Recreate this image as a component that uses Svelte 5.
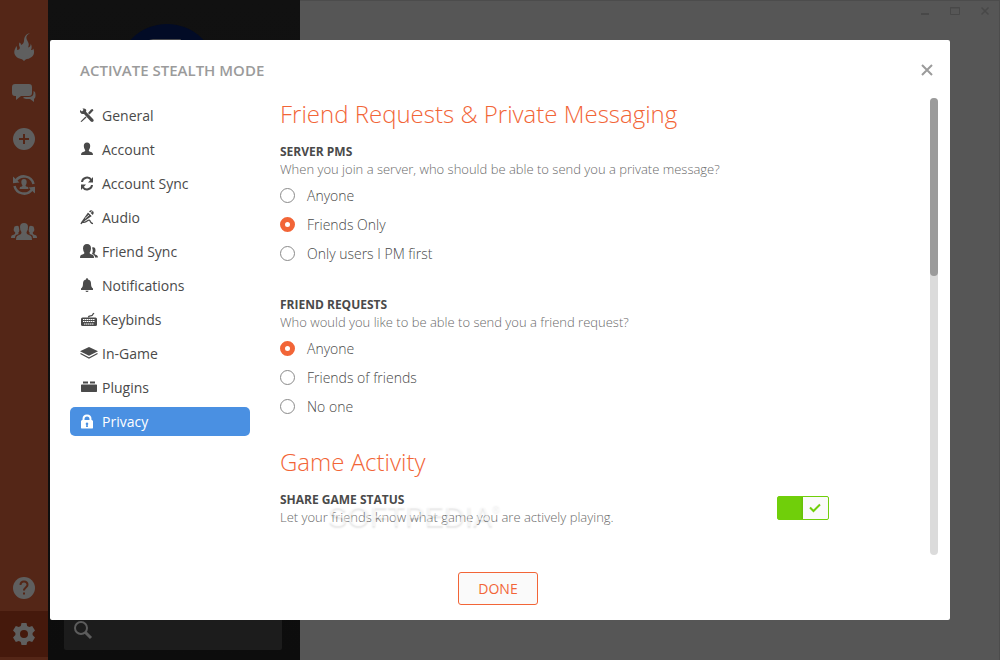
<script lang="ts">
  interface NavItem {
    label: string;
    icon: string;
  }

  interface RadioGroup {
    name: string;
    title: string;
    hint: string;
    options: string[];
  }

  const navItems: NavItem[] = [
    { label: 'General', icon: 'tools' },
    { label: 'Account', icon: 'user' },
    { label: 'Account Sync', icon: 'refresh' },
    { label: 'Audio', icon: 'mic' },
    { label: 'Friend Sync', icon: 'users' },
    { label: 'Notifications', icon: 'bell' },
    { label: 'Keybinds', icon: 'keyboard' },
    { label: 'In-Game', icon: 'layers' },
    { label: 'Plugins', icon: 'brick' },
    { label: 'Privacy', icon: 'lock' }
  ];

  const groups: RadioGroup[] = [
    {
      name: 'pms',
      title: 'SERVER PMS',
      hint: 'When you join a server, who should be able to send you a private message?',
      options: ['Anyone', 'Friends Only', 'Only users I PM first']
    },
    {
      name: 'requests',
      title: 'FRIEND REQUESTS',
      hint: 'Who would you like to be able to send you a friend request?',
      options: ['Anyone', 'Friends of friends', 'No one']
    }
  ];

  let active = $state('Privacy');
  let shareStatus = $state(true);
  let choices = $state<Record<string, string>>({
    pms: 'Friends Only',
    requests: 'Anyone'
  });
</script>

<div class="app">
  <nav class="rail" aria-label="Main">
    <button class="rail-btn" aria-label="Home">
      <svg width="22" height="28" viewBox="0 0 22 28">
        <path d="M17 0c-4 2.500-4.500 5-2.500 8 1.500 2.500 1.700 4 .5 6.500 2-.5 3-2 2.500-4 1.500 2 1.500 4.500.5 6.500 1.300 0 2-.5 2.300-1.500C22.500 20.500 20 25 14 26l-1 .3-2 1.700-2-1.700-1-.3C2 25 0 20 2 16c.5-1 1-1.700 1-3 1.200 1 1.300 2.500 1 4 2 0 3.500-1.500 2.500-3.500-.7-1.500-.7-2.500 0-4 1 .5 1.500 1.500 1.500 2.500 2-1 3-2.500 3-4C11 3.500 13 1 17 0z" />
      </svg>
    </button>
    <button class="rail-btn" aria-label="Messages">
      <svg width="24" height="18" viewBox="0 0 24 18">
        <path d="M3 0h14q3 0 3 3v6q0 3-3 3H9l-5 4v-4H3q-3 0-3-3V3q0-3 3-3z" />
        <path d="M21.500 7q2 .5 2 3v2q0 2-1.500 3v3l-4-3h-4l-3-1 1-1h4.500q5 0 5-4z" />
      </svg>
    </button>
    <button class="rail-btn" aria-label="Add server">
      <svg width="22" height="22" viewBox="0 0 22 22">
        <circle cx="11" cy="11" r="11" />
        <path class="cut" d="M11 6v10M6 11h10" />
      </svg>
    </button>
    <button class="rail-btn" aria-label="Sync friends">
      <svg width="24" height="24" viewBox="0 0 24 24">
        <path class="ring" d="M4 7.500A9.800 9.800 0 0 1 21.500 11M20 16.500A9.800 9.800 0 0 1 2.500 13" />
        <path d="M1 3.500v6.800l6.500-.8zM23 20.500v-6.800l-6.500.8z" />
        <path d="M12 6q2.700 0 2.700 3 0 2-1.200 3.500 0 1 2.500 1.500l.5 2h-9l.5-2q2.500-.5 2.500-1.500Q9.300 11 9.300 9q0-3 2.700-3z" />
      </svg>
    </button>
    <button class="rail-btn" aria-label="Friends">
      <svg width="26" height="17" viewBox="0 0 26 17">
        <path d="M13 0q4 0 4 4 0 3-1 4-1 2 0 3l4 2q1 1 1 4H5q0-3 1-4l4-2q1-1 0-3-1-1-1-4 0-4 4-4z" />
        <path d="M5 3q3-1 3 2 1 4-1 5l1 1-3 1q-1 1-1 3H0q0-3 2-3 3-1 2-3-2-1-1-4 0-2 2-2zM21 3q-3-1-3 2-1 4 1 5l-1 1 3 1q1 1 1 3h4q0-3-2-3-3-1-2-3 2-1 1-4 0-2-2-2z" />
      </svg>
    </button>
    <span class="spacer"></span>
    <button class="rail-btn" aria-label="Help">
      <svg width="22" height="22" viewBox="0 0 22 22">
        <circle cx="11" cy="11" r="11" />
        <path class="cut" d="M7.500 8q0-3.500 3.500-3.500T14.500 8c0 2-3.500 2.500-3.500 5.500M11 15.500v2" />
      </svg>
    </button>
    <button class="rail-btn selected" aria-label="Settings">
      <svg width="22" height="22" viewBox="0 0 22 22">
        <path
          fill-rule="evenodd"
          d="M8.500 0h5l.7 3 2 1 3-1L22 7.500 19.600 10v2l2.400 2.500-2.800 4.500-3-1-2 1-.7 3h-5l-.7-3-2-1-3 1L0 14.500 2.400 12v-2L0 7.500 2.800 3l3 1 2-1zM11 7a4 4 0 1 0 0 8 4 4 0 0 0 0-8z"
        />
      </svg>
    </button>
  </nav>

  <aside class="panel">
    <svg class="avatar" width="100" height="100" viewBox="0 0 100 100" aria-hidden="true">
      <circle cx="50" cy="50" r="50" fill="#020b26" />
      <path d="M26 22q3-6 10-7h28q-2 5-8 10H30z" fill="#48494d" />
    </svg>
    <label class="search">
      <svg width="20" height="20" viewBox="0 0 20 20" aria-hidden="true">
        <circle cx="8" cy="8" r="6" />
        <path d="M12 12l6 6" />
      </svg>
      <input type="search" aria-label="Search" />
    </label>
  </aside>

  <main class="stage">
    <div class="window-controls">
      <button aria-label="Minimize">
        <svg width="10" height="10" viewBox="0 0 10 10"><path d="M1 8h8" stroke-width="2" /></svg>
      </button>
      <button aria-label="Maximize">
        <svg width="10" height="10" viewBox="0 0 10 10"><path d="M.5 1.500h9v7h-9zM0 2h10" /></svg>
      </button>
      <button aria-label="Close window">
        <svg width="10" height="10" viewBox="0 0 10 10"><path d="M1.500 1.500l7 7M8.500 1.500l-7 7" stroke-width="1.500" /></svg>
      </button>
    </div>
  </main>
</div>

<div class="overlay">
  <div class="modal" role="dialog" aria-labelledby="modal-title">
    <header>
      <h1 id="modal-title">ACTIVATE STEALTH MODE</h1>
      <button class="close" aria-label="Close">
        <svg width="12" height="12" viewBox="0 0 12 12"><path d="M1 1l10 10M11 1L1 11" /></svg>
      </button>
    </header>

    <div class="body">
      <nav class="tabs" aria-label="Settings">
        {#each navItems as item}
          <a
            href="#{item.icon}"
            class:active={active === item.label}
            onclick={() => (active = item.label)}
          >
            <svg width="18" height="16" viewBox="0 0 18 16" aria-hidden="true">
              {#if item.icon === 'tools'}
                <path d="M0 2l2 1.500L3.500 2 2.500.500q2.500-.5 3.500 1 .5 1 0 2.300l7 7.200q1.300 1.500.2 2.600-1.200 1-2.600-.3L4 6q-2.700.5-3.700-1.500Q-.2 3.300 0 2zM11 1.500L12.500 1l1 1.200L11 5 9.500 6.500 8 5zM5.500 8.500l1 1-5 4.500-1-.5z" />
              {:else if item.icon === 'user'}
                <path d="M7 0.500q3.200 0 3.200 3.500 0 2.500-1.500 4.500 0 1 3 1.800 1.300.4 1.300 2.700H1q0-2.300 1.300-2.700 3-.8 3-1.800Q3.800 6.500 3.800 4 3.800.5 7 .5z" />
              {:else if item.icon === 'refresh'}
                <path class="line" d="M2 6a5 4.800 0 0 1 9.300-2M12 9a5 4.800 0 0 1-9.300 2" />
                <path d="M13 1v5.500H8zM1 14V8.500h5z" />
              {:else if item.icon === 'mic'}
                <path d="M9 1.500q2-2 3.800-.5t0 4zM8 2.500L11.800 6l-6.500 4.500-3 2.500-1-1z" />
                <path class="thin" d="M1 14q.5-2 2.500-1.700 2 .2 4-1.500t3 1q1 1.700 2.500 1.900" />
                <path class="glint" d="M8.500 2l4 4M10 3l2.500-2M5 8.500l4-3.500" />
              {:else if item.icon === 'users'}
                <path d="M7 0q4 0 4 4.500 0 2-1.500 4.500 0 1 3.500 2 1 .5 1 3H0q0-2.500 1-3 3.500-1 3.500-2Q3 6.500 3 4.500 3 0 7 0z" />
                <path d="M12 3.500q3.500-1 3.500 3 0 1.500-1 3 0 1 2 1.500 1.500.5 1.500 2.500h-3q0-2.500-3-3.500 1.500-3 0-6.500z" />
              {:else if item.icon === 'bell'}
                <path d="M6 1.500Q6 0 7 0t1 1.500q3 .5 3 4 0 4 2 5V12H1v-1.500q2-1 2-5 0-3.500 3-4zM5.500 12.700h3Q8.500 14 7 14t-1.500-1.300z" />
              {:else if item.icon === 'keyboard'}
                <path d="M2.500 5.500h13Q17 5.500 17 7v5.500q0 1.500-1.500 1.500h-13Q1 14 1 12.500V7q0-1.500 1.500-1.500z" />
                <path class="thin" d="M8.500 5.500q0-1.700 2-1.700t2.500-1.700l1-1" />
                <path class="keys" d="M3 7.500h12M3 9.500h12M4 12h10" />
              {:else if item.icon === 'layers'}
                <path d="M9 1l9 4.300-9 4.400L0 5.300z" />
                <path class="thin" d="M.5 7.500L9 12l8.500-4.500" />
              {:else if item.icon === 'brick'}
                <path d="M3 1.500h5v2H3zM10 1.500h5v2h-5zM1.500 4.500h15l.5.5v6.500l-.5.5h-15l-.5-.5V5z" />
              {:else}
                <path
                  fill-rule="evenodd"
                  d="M2.500 6V5Q2.500.5 7 .5T11.500 5v1H12l1 1v7l-.5.5h-11L1 14V7l1-1zm2 0h5V5Q9.500 2.500 7 2.500T4.500 5zM7 8.500a1.300 1.300 0 0 0-.7 2.400L6 13h2l-.3-2.100A1.300 1.300 0 0 0 7 8.500z"
                />
              {/if}
            </svg>
            {item.label}
          </a>
        {/each}
      </nav>

      <section class="content">
        <h2>Friend Requests &amp; Private Messaging</h2>
        {#each groups as group}
          <fieldset>
            <legend>{group.title}</legend>
            <p>{group.hint}</p>
            <div class="options">
              {#each group.options as option}
                <label>
                  <input type="radio" name={group.name} value={option} bind:group={choices[group.name]} />
                  {option}
                </label>
              {/each}
            </div>
          </fieldset>
        {/each}

        <h2>Game Activity</h2>
        <div class="setting">
          <div>
            <label class="setting-title" for="share">SHARE GAME STATUS</label>
            <p>Let your friends know what game you are actively playing.</p>
          </div>
          <span class="switch">
            <input id="share" type="checkbox" bind:checked={shareStatus} />
            <svg width="12" height="10" viewBox="0 0 12 10" aria-hidden="true">
              <path d="M1 4.500L4.500 8 11 1.500" />
            </svg>
          </span>
          <span class="watermark" aria-hidden="true">SOFTPEDIA<sup>®</sup></span>
        </div>
      </section>

      <div class="scrollbar"><div class="thumb"></div></div>
    </div>

    <footer>
      <button class="done">DONE</button>
    </footer>
  </div>
</div>

<style>
  :global(body) {
    margin: 0;
    font-family: 'Open Sans', sans-serif;
    font-size: 14px;
    color: #4a4a4a;
  }

  button {
    border: none;
    padding: 0;
    background: none;
    font-family: inherit;
    cursor: pointer;
  }

  svg {
    display: block;
    flex-shrink: 0;
  }

  .app {
    display: flex;
    height: 100vh;
    background: #565656;
  }

  .rail {
    display: flex;
    flex-direction: column;
    box-sizing: border-box;
    width: 48px;
    padding: 24px 0 3px;
    background: #542617;
  }

  .rail-btn {
    display: grid;
    place-items: center;
    height: 46px;
    fill: #5f5f5f;
  }

  .rail-btn.selected {
    background: #45190c;
  }

  .spacer {
    flex: 1;
  }

  .cut {
    fill: none;
    stroke: #542617;
    stroke-width: 2;
  }

  .ring {
    fill: none;
    stroke: #5f5f5f;
    stroke-width: 2.5;
  }

  .panel {
    display: flex;
    flex-direction: column;
    justify-content: space-between;
    box-sizing: border-box;
    width: 252px;
    padding: 24px 18px 10px 16px;
    background: linear-gradient(#111, #0d0d0d);
  }

  .avatar {
    align-self: center;
    margin-right: 12px;
  }

  .search {
    display: flex;
    align-items: center;
    height: 40px;
    padding: 0 9px;
    border-radius: 2px;
    background: #1c1c1c;
  }

  .search svg {
    fill: none;
    stroke: #5c5c5c;
    stroke-width: 2;
  }

  .search path {
    stroke-width: 3;
  }

  .search input {
    flex: 1;
    min-width: 0;
    border: none;
    outline: none;
    background: none;
    color: #777;
  }

  .stage {
    flex: 1;
    border-top: 1px solid #4c4c4c;
    border-right: 1px solid #4c4c4c;
  }

  .window-controls {
    display: flex;
    justify-content: flex-end;
    gap: 20px;
    padding: 5px 9px;
  }

  .window-controls svg {
    fill: none;
    stroke: #484848;
  }

  .overlay {
    position: fixed;
    inset: 0;
    display: flex;
    padding: 40px 50px;
  }

  .modal {
    display: flex;
    flex: 1;
    flex-direction: column;
    min-width: 0;
    border-radius: 2px;
    background: #fff;
  }

  header {
    display: flex;
    align-items: center;
    justify-content: space-between;
    height: 58px;
    padding: 2px 17px 0 30px;
    box-sizing: border-box;
  }

  h1 {
    margin: 0;
    font-size: 15px;
    font-weight: 600;
    color: #9b9b9b;
  }

  .close svg {
    fill: none;
    stroke: #9b9b9b;
    stroke-width: 2;
  }

  .body {
    display: flex;
    flex: 1;
    gap: 30px;
    min-height: 0;
    padding: 0 12px 0 20px;
  }

  .tabs {
    display: flex;
    flex-direction: column;
    gap: 5px;
    width: 180px;
    padding-top: 3px;
  }

  .tabs a {
    display: flex;
    align-items: center;
    gap: 4px;
    height: 29px;
    padding-left: 10px;
    border-radius: 5px;
    color: #4a4a4a;
    fill: currentColor;
    text-decoration: none;
  }

  .tabs a.active {
    background: #4a90e2;
    color: #fff;
  }

  .line,
  .thin,
  .glint,
  .keys {
    fill: none;
    stroke: currentColor;
    stroke-width: 2;
  }

  .thin {
    stroke-width: 1.3;
  }

  .glint,
  .keys {
    stroke: #fff;
    stroke-width: 0.8;
  }

  .keys {
    stroke-width: 1;
    stroke-dasharray: 1.5 0.5;
  }

  .content {
    flex: 1;
    padding-right: 71px;
    overflow: hidden;
  }

  h2 {
    margin: 0 0 13px;
    font-size: 24px;
    font-weight: 300;
    line-height: 32px;
    color: #f26537;
  }

  fieldset {
    min-width: 0;
    margin: 0 0 28px;
    padding: 0;
    border: none;
  }

  fieldset:last-of-type {
    margin-bottom: 25px;
  }

  legend,
  .setting-title {
    display: block;
    padding: 0;
    font-size: 12px;
    font-weight: 700;
    line-height: 18px;
  }

  p {
    margin: 0;
    font-size: 13px;
    font-weight: 300;
    line-height: 16px;
    color: #6a6a6a;
  }

  .options {
    display: flex;
    flex-direction: column;
    align-items: flex-start;
    padding-top: 4px;
  }

  .options label {
    display: flex;
    align-items: center;
    gap: 12px;
    height: 29px;
    font-weight: 300;
  }

  .options input {
    appearance: none;
    box-sizing: border-box;
    width: 15px;
    height: 15px;
    margin: 0;
    border: 1px solid #8a8a8a;
    border-radius: 50%;
    background: #fff;
  }

  .options input:checked {
    border: 5px solid #f26537;
  }

  .setting {
    position: relative;
    display: flex;
    align-items: center;
    justify-content: space-between;
  }

  .switch {
    display: grid;
    align-items: center;
    justify-items: end;
  }

  .switch input,
  .switch svg {
    grid-area: 1 / 1;
  }

  .switch input {
    appearance: none;
    box-sizing: border-box;
    width: 52px;
    height: 24px;
    margin: 0;
    border: 1px solid #aaa;
    border-radius: 2px;
    background: #fafafa;
  }

  .switch input:checked {
    border-color: #70cf0a;
    background: linear-gradient(90deg, #70cf0a 22px, #65bd08 25px, #fafafa 25px);
  }

  .switch svg {
    margin-right: 8px;
    fill: none;
    stroke: #70cf0a;
    stroke-width: 2;
    pointer-events: none;
  }

  .watermark {
    position: absolute;
    top: 8px;
    left: 48px;
    font-family: 'Liberation Sans', sans-serif;
    font-size: 29px;
    line-height: 34px;
    color: rgba(255, 255, 255, 0.5);
    text-shadow: 0 2px 2px rgba(0, 0, 0, 0.1);
    pointer-events: none;
  }

  .watermark sup {
    font-size: 10px;
    line-height: 0;
    vertical-align: 14px;
  }

  .scrollbar {
    width: 8px;
    margin-bottom: 1px;
    border-radius: 4px;
    background: #dbdbdb;
  }

  .thumb {
    height: 39%;
    border-radius: 4px;
    background: #9b9b9b;
  }

  footer {
    display: flex;
    align-items: flex-start;
    justify-content: center;
    height: 48px;
    padding-top: 16px;
    margin-right: 4px;
  }

  .done {
    width: 80px;
    height: 33px;
    border: 1px solid #f26537;
    border-radius: 3px;
    background: #fafafa;
    font-size: 14px;
    color: #f26537;
  }
</style>
